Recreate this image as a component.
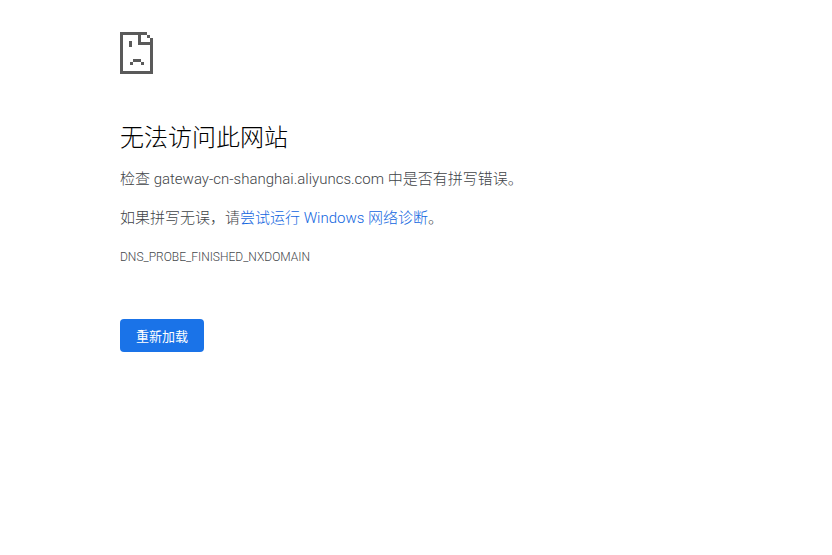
<div class="page">
  <div class="icon">
    <svg width="33" height="42" viewBox="0 0 33 42" fill="#5a5a5a" shape-rendering="crispEdges">
      <path d="M0 0h27v3h-24v36h27v-30h3v33h-33z" />
      <path d="M27 3h3v3h3v3h-3v-3h-3z" />
      <path d="M18 3h3v7h9v3h-12z" />
      <path d="M9 9h3v6h-3z" />
      <path d="M13 27h8v3h3v3h-3v-3h-8v3h-3v-3h3z" />
    </svg>
  </div>
  <h1>无法访问此网站</h1>
  <p class="first">检查 gateway-cn-shanghai.aliyuncs.com 中是否有拼写错误。</p>
  <p class="second">如果拼写无误，请<a href="#diag">尝试运行 Windows 网络诊断</a>。</p>
  <div class="code">DNS_PROBE_FINISHED_NXDOMAIN</div>
  <button>重新加载</button>
</div>

<style>
  :global(body) {
    background: #fff;
  }

  .page {
    display: flex;
    flex-direction: column;
    align-items: flex-start;
    padding: 32px 0 0 120px;
    font-family: Roboto, "Noto Sans CJK SC", sans-serif;
    color: #5f6368;
    font-size: 15px;
  }

  .icon {
    height: 42px;
    margin-bottom: 49px;
  }

  .icon svg {
    display: block;
  }

  h1 {
    margin: 0;
    font-size: 24px;
    font-weight: 300;
    line-height: 30px;
    color: #000;
  }

  p {
    margin: 0;
    line-height: 22px;
    font-weight: 300;
    color: #404347;
  }

  .first {
    margin-top: 15px;
  }

  .second {
    margin-top: 17px;
  }

  a {
    color: #1266e0;
    text-decoration: none;
  }

  .code {
    margin-top: 20px;
    font-size: 12px;
    line-height: 16px;
    font-weight: 300;
    color: #45484c;
    text-transform: uppercase;
  }

  button {
    margin-top: 54px;
    width: 84px;
    height: 33px;
    padding: 0;
    border: 0;
    border-radius: 4px;
    background: #1a73e8;
    color: #fff;
    font-family: inherit;
    font-size: 13px;
  }
</style>
